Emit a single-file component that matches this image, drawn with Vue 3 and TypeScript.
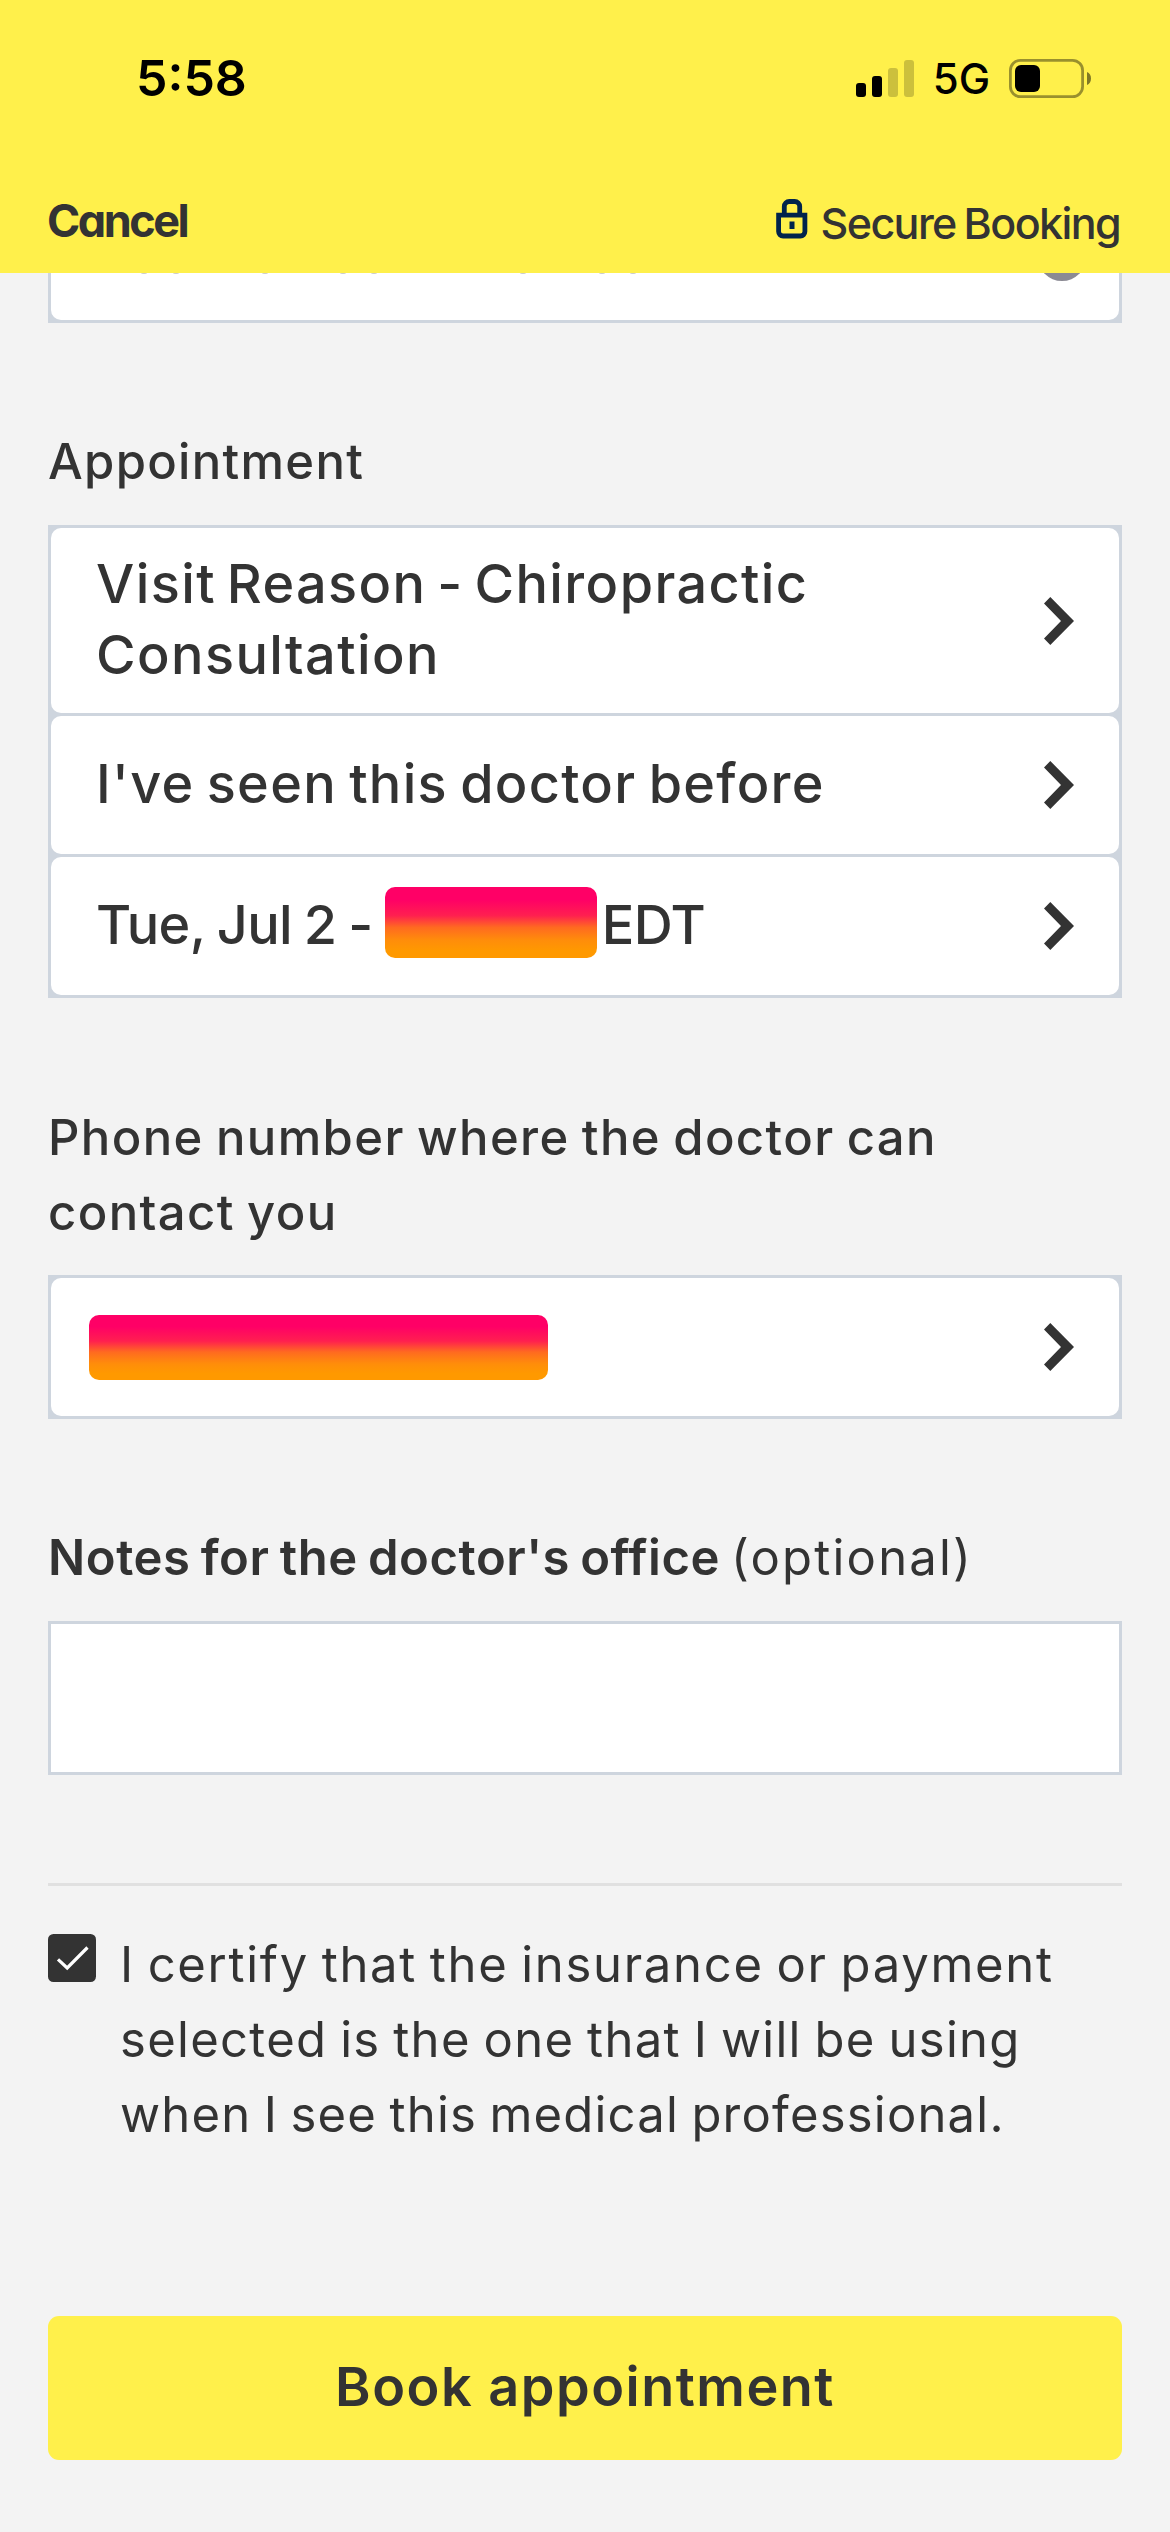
<script setup lang="ts">
interface Row {
  id: string
  before: string
  masked: boolean
  after: string
}

const rows: Row[] = [
  { id: 'reason', before: 'Visit Reason - Chiropractic Consultation', masked: false, after: '' },
  { id: 'seen', before: "I've seen this doctor before", masked: false, after: '' },
  { id: 'time', before: 'Tue, Jul 2 -', masked: true, after: 'EDT' },
]

// Bottom edges of the round letters that peek out from under the header
const peeks: number[] = [93, 125, 214, 292, 323, 472, 551, 582]
</script>

<template>
  <div class="screen">
    <header class="top">
      <div class="status">
        <span class="clock">5:58</span>
        <div class="status-right">
          <svg class="signal" viewBox="0 0 58 37" width="58" height="37">
            <rect x="0" y="23" width="10" height="14" rx="3" />
            <rect x="16" y="16" width="10" height="21" rx="3" />
            <rect x="32" y="8" width="10" height="29" rx="3" opacity="0.2" />
            <rect x="48" y="0" width="10" height="37" rx="3" opacity="0.2" />
          </svg>
          <span class="network">5G</span>
          <svg class="battery" viewBox="0 0 82 39" width="82" height="39">
            <rect x="1.4" y="1.4" width="72.2" height="36.2" rx="10" fill="none" stroke="#000" stroke-opacity="0.4" stroke-width="2.8" />
            <rect x="6" y="6" width="25" height="27" rx="6" />
            <path d="M78 13c2.600 1 4 3.500 4 6.500s-1.400 5.500-4 6.500z" opacity="0.5" />
          </svg>
        </div>
      </div>
      <nav class="nav">
        <span class="cancel">Cancel</span>
        <div class="secure">
          <svg class="lock" viewBox="0 0 32 40" width="32" height="40">
            <g fill="none" stroke="#00234b" stroke-width="4.800">
              <path d="M8.300 15V7.500a5 5 0 0 1 5-5h5.400a5 5 0 0 1 5 5V15" />
              <path d="M2.600 16.200h26.300v16.300a4.500 4.500 0 0 1-4.500 4.500H7.100a4.500 4.500 0 0 1-4.500-4.500z" />
            </g>
            <rect x="13.500" y="22.500" width="5" height="7.500" fill="#00234b" />
          </svg>
          <span class="secure-text">Secure Booking</span>
        </div>
      </nav>
    </header>

    <main class="content">
      <div class="group clipped">
        <div class="cell">
          <svg viewBox="0 0 1068 8" width="1068" height="8">
            <ellipse v-for="x in peeks" :key="x" :cx="x" cy="0" rx="3" ry="1" fill="#c9c9c9" />
            <circle cx="1011" cy="-16.500" r="24.500" fill="#8b8a94" />
          </svg>
        </div>
      </div>

      <h2 class="label l-appt">Appointment</h2>
      <div class="group">
        <div v-for="row in rows" :key="row.id" class="cell" :class="row.id">
          <div class="cell-text">
            <span>{{ row.before }}</span>
            <i v-if="row.masked" class="mask mask-time"></i>
            <span v-if="row.after" class="edt">{{ row.after }}</span>
          </div>
          <svg class="chev" viewBox="0 0 30 48" width="30" height="48"><path d="M6.300 0 30 24 6.300 48 0 41.500 17 24 0 6.500z" /></svg>
        </div>
      </div>

      <h2 class="label l-phone">Phone number where the doctor can contact you</h2>
      <div class="group">
        <div class="cell phone">
          <i class="mask mask-phone"></i>
          <svg class="chev" viewBox="0 0 30 48" width="30" height="48"><path d="M6.300 0 30 24 6.300 48 0 41.500 17 24 0 6.500z" /></svg>
        </div>
      </div>

      <h2 class="label l-notes"><b>Notes for the doctor's office</b> <span class="optional">(optional)</span></h2>
      <div class="notes"></div>

      <hr class="rule" />

      <div class="certify">
        <svg class="check" viewBox="0 0 48 48" width="48" height="48">
          <rect width="48" height="48" rx="5.500" fill="#333" />
          <path d="M10 25.300 19.200 34 39.500 13.500" fill="none" stroke="#fff" stroke-width="3.200" />
        </svg>
        <p class="certify-text">
          <span class="c1">I certify that the insurance or payment</span>
          <span class="c2">selected is the one that I will be using</span>
          <span class="c3">when I see this medical professional.</span>
        </p>
      </div>

      <button class="book" type="button">Book appointment</button>
    </main>
  </div>
</template>

<style>
body {
  background: #f3f3f3;
}
</style>

<style scoped>
.screen {
  width: 1170px;
  height: 2532px;
  overflow: hidden;
  background: #f3f3f3;
  color: #333;
  font-family: Inter, "Liberation Sans", sans-serif;
}
.top {
  height: 273px;
  background: #fff04b;
}
.status {
  height: 156px;
  padding: 0 79px 0 136px;
  display: flex;
  align-items: center;
  justify-content: space-between;
  box-sizing: border-box;
  color: #000;
}
.clock {
  font-size: 50px;
  font-weight: 600;
}
.status-right {
  display: flex;
  align-items: center;
}
.network {
  width: 95px;
  text-align: center;
  font-size: 42px;
  font-weight: 500;
}
.nav {
  height: 117px;
  padding: 0 50px 0 47px;
  display: flex;
  justify-content: space-between;
  align-items: flex-start;
}
.cancel {
  margin-top: 38px;
  font-size: 45px;
  line-height: 54px;
  font-weight: 700;
  letter-spacing: -2.500px;
  font-feature-settings: "cv11";
}
.secure {
  display: flex;
}
.lock {
  margin: 43px 13px 0 0;
}
.secure-text {
  margin-top: 41px;
  font-size: 43px;
  line-height: 52px;
  font-weight: 500;
  letter-spacing: -1.600px;
  word-spacing: -2px;
}
.content {
  padding: 0 48px;
}
.group {
  padding: 3px;
  display: flex;
  flex-direction: column;
  gap: 3px;
  background: #ced5de;
}
.cell {
  padding: 0 45px 0 45px;
  height: 138px;
  box-sizing: border-box;
  display: flex;
  align-items: center;
  justify-content: space-between;
  background: #fff;
  border-radius: 10px;
  font-size: 54px;
  line-height: 71px;
  font-weight: 500;
}
.clipped {
  padding-top: 0;
}
.clipped .cell {
  height: 47px;
  padding: 0;
  border-radius: 0 0 10px 10px;
  align-items: flex-start;
}
.cell.reason {
  height: 185px;
  letter-spacing: 1.400px;
  word-spacing: -5px;
}
.cell.reason .cell-text {
  width: 800px;
}
.cell.seen {
  letter-spacing: 1.300px;
  word-spacing: -3.500px;
}
.cell.time {
  letter-spacing: -0.600px;
  word-spacing: -2px;
}
.chev {
  flex: none;
  fill: #333;
}
.cell-text {
  display: flex;
  align-items: center;
  padding-bottom: 3px;
}
.mask {
  flex: none;
  border-radius: 10px;
  background: linear-gradient(#ff0066 0%, #ff0066 18%, #ff1f50 40%, #ff6a20 57%, #ff8d0a 75%, #ff9900 90%);
}
.mask-time {
  width: 212px;
  height: 71px;
  margin: 0 5px 4px 12px;
}
.mask-phone {
  width: 459px;
  height: 65px;
  margin-left: -7px;
}
.label {
  margin: 0;
  font-size: 49px;
  line-height: 75px;
  font-weight: 500;
}
.l-appt {
  padding: 101px 0 26px;
  letter-spacing: 1.300px;
}
.l-phone {
  max-width: 1000px;
  padding: 102px 0 25px;
  letter-spacing: 1.400px;
  word-spacing: -2.300px;
}
.l-notes {
  padding: 101px 0 26px;
  letter-spacing: 0.550px;
  word-spacing: -2.700px;
}
.l-notes b {
  font-weight: 600;
}
.optional {
  font-weight: 400;
  letter-spacing: 2.200px;
}
.notes {
  height: 154px;
  box-sizing: border-box;
  border: 3px solid #ced5de;
  background: #fff;
}
.rule {
  margin: 108px 0 0;
  height: 3px;
  border: 0;
  background: #e0e0e0;
}
.certify {
  margin-top: 41px;
  display: flex;
  gap: 24px;
}
.check {
  flex: none;
  margin-top: 7px;
}
.certify-text {
  margin: 0;
  display: flex;
  flex-direction: column;
  font-size: 49px;
  line-height: 75px;
  font-weight: 400;
  white-space: nowrap;
}
.c1 {
  letter-spacing: 1.700px;
  word-spacing: -2.700px;
}
.c2 {
  letter-spacing: 1.300px;
  word-spacing: -2.300px;
}
.c3 {
  letter-spacing: 1.200px;
  word-spacing: -2.600px;
}
.book {
  display: block;
  width: 100%;
  height: 144px;
  margin: 164px 0 0;
  padding: 0 0 3px;
  border: 0;
  border-radius: 11px;
  background: #fff04b;
  color: #333;
  font: 600 54px Inter, "Liberation Sans", sans-serif;
  letter-spacing: 1.500px;
}
</style>
